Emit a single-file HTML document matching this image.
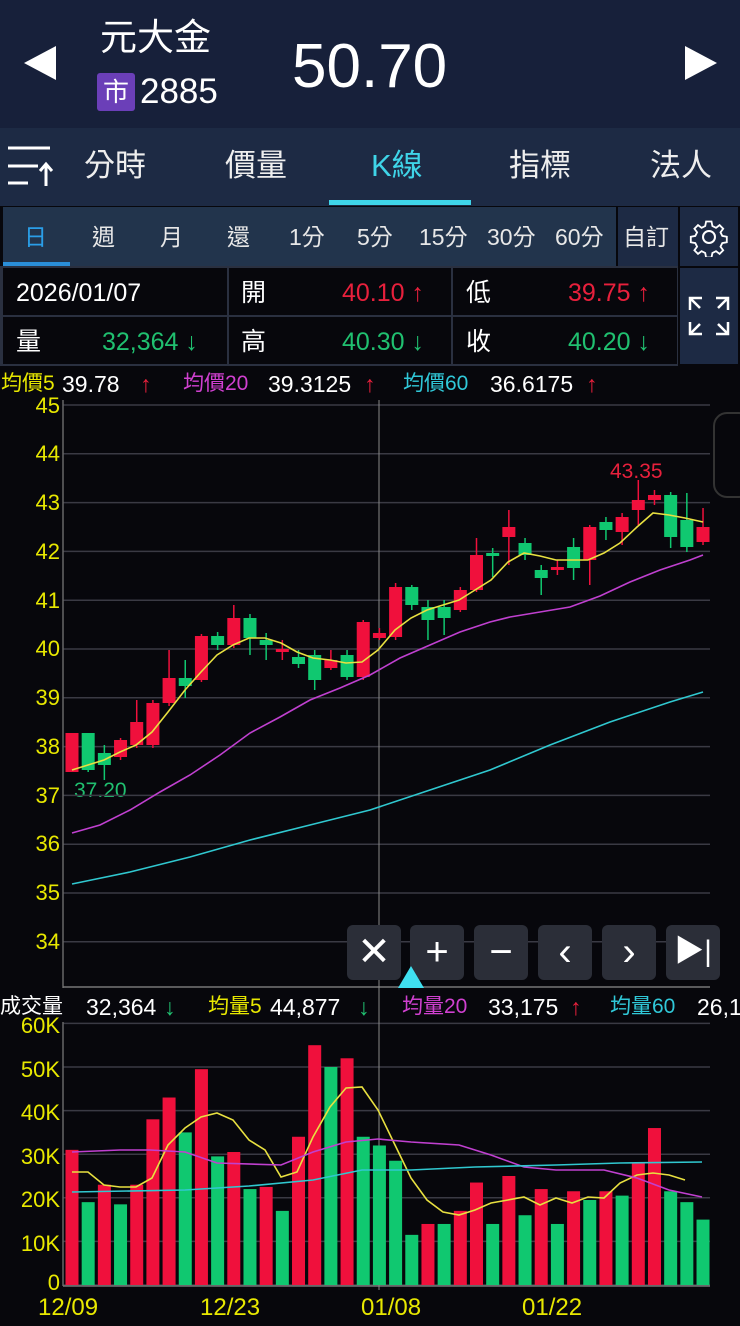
<!DOCTYPE html>
<html><head><meta charset="utf-8"><style>
*{margin:0;padding:0;box-sizing:border-box}
body{width:740px;height:1326px;background:#07070c;font-family:"Liberation Sans","Noto Sans CJK TC",sans-serif;color:#fff;position:relative;overflow:hidden}
.a{position:absolute;white-space:nowrap}
.hdr{left:0;top:0;width:740px;height:128px;background:#17203a}
.tabs{left:0;top:128px;width:740px;height:78px;background:#1d2a44}
.tab{position:absolute;top:146px;font-size:31px;color:#eee;line-height:40px}
.per{left:3px;top:207px;width:613px;height:59px;background:#22344c}
.pi{position:absolute;top:222px;font-size:23px;color:#e8e8e8;line-height:30px}
.cell{position:absolute;background:#07070c;height:47px}
.lbl{position:absolute;font-size:25px;line-height:30px}
.ylab{position:absolute;font-size:22px;color:#e8e800;left:2px;width:58px;text-align:right}
.m{position:absolute;font-size:21px;line-height:26px;white-space:nowrap}
.n{position:absolute;font-size:23px;line-height:26px;white-space:nowrap}
.btn{position:absolute;top:925px;width:54px;height:55px;background:#2b2e38;border-radius:6px;font-size:40px;color:#fff;text-align:center;line-height:54px}
</style></head><body>
<div class="a hdr"></div>
<svg class="a" style="left:22px;top:44px" width="36" height="38"><polygon points="34,2 34,36 2,19" fill="#fff"/></svg>
<svg class="a" style="left:683px;top:44px" width="36" height="38"><polygon points="2,2 2,36 34,19" fill="#fff"/></svg>
<div class="a" style="left:100px;top:14px;font-size:37px;line-height:48px">元大金</div>
<div class="a" style="left:97px;top:73px;width:38px;height:38px;background:#6b3fb8;border-radius:3px;font-size:26px;text-align:center;line-height:38px">市</div>
<div class="a" style="left:140px;top:70px;font-size:35px;line-height:44px">2885</div>
<div class="a" style="left:292px;top:32px;font-size:62px;line-height:70px">50.70</div>
<div class="a tabs"></div>
<svg class="a" style="left:8px;top:142px" width="48" height="46"><g stroke="#fff" stroke-width="3" fill="none"><line x1="0" y1="6" x2="42" y2="6"/><line x1="0" y1="24" x2="30" y2="24"/><line x1="0" y1="41" x2="20" y2="41"/><line x1="38" y1="44" x2="38" y2="22"/><polyline points="32,29 38,22 44,29"/></g></svg>
<div class="tab" style="left:84px">分時</div>
<div class="tab" style="left:225px">價量</div>
<div class="tab" style="left:371px;color:#3fd4e8">K線</div>
<div class="tab" style="left:509px">指標</div>
<div class="tab" style="left:650px">法人</div>
<div class="a" style="left:329px;top:200px;width:142px;height:5px;background:#3fd4e8"></div>
<div class="a per"></div>
<div class="a" style="left:3px;top:262px;width:67px;height:4px;background:#2a8ed8"></div>
<div class="pi" style="left:24px;color:#2a9ee8">日</div>
<div class="pi" style="left:92px">週</div>
<div class="pi" style="left:160px">月</div>
<div class="pi" style="left:227px">還</div>
<div class="pi" style="left:289px">1分</div>
<div class="pi" style="left:357px">5分</div>
<div class="pi" style="left:419px">15分</div>
<div class="pi" style="left:487px">30分</div>
<div class="pi" style="left:555px">60分</div>
<div class="a" style="left:618px;top:207px;width:60px;height:59px;background:#1d2a44"></div>
<div class="pi" style="left:623px">自訂</div>
<div class="a" style="left:680px;top:207px;width:58px;height:59px;background:#1d2a44"></div>
<svg class="a" style="left:689px;top:217px" width="40" height="40" viewBox="0 0 40 40"><g fill="none" stroke="#fff" stroke-width="2"><circle cx="20" cy="20" r="6"/><path d="M17 3h6l1 5 4 2 4-3 4 4-3 4 2 4 5 1v6l-5 1-2 4 3 4-4 4-4-3-4 2-1 5h-6l-1-5-4-2-4 3-4-4 3-4-2-4-5-1v-6l5-1 2-4-3-4 4-4 4 3 4-2z" transform="scale(.9) translate(2 2)"/></g></svg>
<div class="a" style="left:0;top:266px;width:678px;height:100px;background:#2a3040"></div>
<div class="cell" style="left:3px;top:268px;width:224px"></div>
<div class="cell" style="left:229px;top:268px;width:222px"></div>
<div class="cell" style="left:453px;top:268px;width:224px"></div>
<div class="cell" style="left:3px;top:317px;width:224px"></div>
<div class="cell" style="left:229px;top:317px;width:222px"></div>
<div class="cell" style="left:453px;top:317px;width:224px"></div>
<div class="lbl" style="left:16px;top:278px">2026/01/07</div>
<div class="lbl" style="left:241px;top:278px">開</div>
<div class="lbl" style="left:342px;top:278px;color:#e8203c">40.10 ↑</div>
<div class="lbl" style="left:466px;top:278px">低</div>
<div class="lbl" style="left:568px;top:278px;color:#e8203c">39.75 ↑</div>
<div class="lbl" style="left:16px;top:327px">量</div>
<div class="lbl" style="left:102px;top:327px;color:#20c070">32,364 ↓</div>
<div class="lbl" style="left:241px;top:327px">高</div>
<div class="lbl" style="left:342px;top:327px;color:#20c070">40.30 ↓</div>
<div class="lbl" style="left:466px;top:327px">收</div>
<div class="lbl" style="left:568px;top:327px;color:#20c070">40.20 ↓</div>
<div class="a" style="left:680px;top:268px;width:58px;height:96px;background:#1d2a44"></div>
<svg class="a" style="left:688px;top:296px" width="42" height="40"><g stroke="#fff" stroke-width="2.5" fill="none"><path d="M2 14V2h12M2 2l10 10"/><path d="M40 14V2H28M40 2L30 12"/><path d="M2 26v12h12M2 38l10-10"/><path d="M40 26v12H28M40 38L30 28"/></g></svg>
<div class="m" style="left:1px;top:371px;color:#e8e800">均價5</div><div class="n" style="left:62px;top:371px">39.78</div><div class="n" style="left:140px;top:371px;color:#e8203c">↑</div>
<div class="m" style="left:183px;top:371px;color:#d040d0">均價20</div><div class="n" style="left:268px;top:371px">39.3125</div><div class="n" style="left:364px;top:371px;color:#e8203c">↑</div>
<div class="m" style="left:403px;top:371px;color:#30c8d8">均價60</div><div class="n" style="left:490px;top:371px">36.6175</div><div class="n" style="left:586px;top:371px;color:#e8203c">↑</div>
<div class="m" style="left:0;top:994px">成交量</div><div class="n" style="left:86px;top:994px">32,364</div><div class="n" style="left:164px;top:994px;color:#20c070">↓</div>
<div class="m" style="left:208px;top:994px;color:#e8e800">均量5</div><div class="n" style="left:270px;top:994px">44,877</div><div class="n" style="left:358px;top:994px;color:#20c070">↓</div>
<div class="m" style="left:402px;top:994px;color:#d040d0">均量20</div><div class="n" style="left:488px;top:994px">33,175</div><div class="n" style="left:570px;top:994px;color:#e8203c">↑</div>
<div class="m" style="left:610px;top:994px;color:#30c8d8">均量60</div><div class="n" style="left:697px;top:994px">26,1</div>
<div class="ylab" style="top:393px">45</div><div class="ylab" style="top:441px">44</div><div class="ylab" style="top:490px">43</div><div class="ylab" style="top:539px">42</div><div class="ylab" style="top:588px">41</div><div class="ylab" style="top:636px">40</div><div class="ylab" style="top:685px">39</div><div class="ylab" style="top:734px">38</div><div class="ylab" style="top:783px">37</div><div class="ylab" style="top:831px">36</div><div class="ylab" style="top:880px">35</div><div class="ylab" style="top:929px">34</div>
<div class="ylab" style="top:1013px">60K</div><div class="ylab" style="top:1057px">50K</div><div class="ylab" style="top:1100px">40K</div><div class="ylab" style="top:1144px">30K</div><div class="ylab" style="top:1187px">20K</div><div class="ylab" style="top:1231px">10K</div><div class="ylab" style="top:1270px">0</div>
<div class="a" style="left:38px;top:1294px;font-size:24px;color:#e8e800">12/09</div>
<div class="a" style="left:200px;top:1294px;font-size:24px;color:#e8e800">12/23</div>
<div class="a" style="left:361px;top:1294px;font-size:24px;color:#e8e800">01/08</div>
<div class="a" style="left:522px;top:1294px;font-size:24px;color:#e8e800">01/22</div>
<div class="a" style="left:610px;top:460px;font-size:21px;color:#e8203c">43.35</div>
<div class="a" style="left:74px;top:779px;font-size:21px;color:#20c070">37.20</div>
<svg id="ch" class="a" style="left:0;top:0" width="740" height="1326"></svg>
<div class="btn" style="left:347px">✕</div>
<div class="btn" style="left:410px">+</div>
<div class="btn" style="left:474px">−</div>
<div class="btn" style="left:538px">‹</div>
<div class="btn" style="left:602px">›</div>
<div class="btn" style="left:666px;font-size:30px">▶|</div>
<svg class="a" style="left:398px;top:966px" width="26" height="22"><polygon points="13,0 26,22 0,22" fill="#3fe0f0"/></svg>
<script>
var s='',G='#3a3a44',R='#f0103c',Gr='#10c870';
for(var p=45;p>=34;p--){var y=405+(45-p)*48.8;s+='<line x1="63" x2="710" y1="'+y+'" y2="'+y+'" stroke="'+G+'" stroke-width="1.5"/>';}
for(var k=0;k<=6;k++){var y=1285-k*43.6;s+='<line x1="63" x2="710" y1="'+y+'" y2="'+y+'" stroke="'+G+'" stroke-width="1.5"/>';}
s+='<line x1="63" x2="63" y1="400" y2="988" stroke="#666" stroke-width="1.5"/><line x1="63" x2="710" y1="987" y2="987" stroke="#777" stroke-width="1.5"/>';
s+='<line x1="63" x2="63" y1="1022" y2="1286" stroke="#666" stroke-width="1.5"/><line x1="63" x2="710" y1="1286" y2="1286" stroke="#777" stroke-width="1.5"/>';
s+='<line x1="379" x2="379" y1="400" y2="1290" stroke="#888" stroke-width="1"/>';
var c=[[733,772,733,772,1],[733,770,733,772,0],[753,765,745,780,0],[740,757,738,760,1],[722,745,700,748,1],[703,745,700,748,1],[678,703,650,706,1],[678,686,660,698,0],[636,680,634,682,1],[636,645,632,650,0],[618,645,605,648,1],[618,638,614,655,0],[640,645,633,660,0],[649,652,640,660,1],[657,664,650,668,0],[655,680,650,690,0],[660,668,650,670,1],[655,677,650,680,0],[622,677,620,680,1],[633,638,628,640,1],[587,637,583,640,1],[587,605,585,610,0],[607,620,600,640,0],[607,618,600,635,0],[590,610,587,612,1],[555,590,538,592,1],[553,556,548,577,0],[527,537,510,565,1],[543,555,538,560,0],[570,578,565,595,0],[567,570,560,575,1],[547,568,538,580,0],[527,560,525,585,1],[522,530,517,540,0],[517,532,513,545,1],[500,510,480,525,1],[495,500,490,505,1],[495,537,492,548,0],[520,547,493,552,0],[527,542,508,545,1]];
var v=[31,19,23,18.5,23,38,43,35,49.5,29.5,30.5,22,22.5,17,34,55,50,52,34,32,28.5,11.5,14,14,17,23.5,14,25,16,22,14,21.5,19.5,21.5,20.5,28,36,21.5,19,15];
var vc=[1,0,1,0,1,1,1,0,1,0,1,0,1,0,1,1,0,1,0,0,0,0,1,0,1,1,0,1,0,1,0,1,0,1,0,1,1,0,0,0];
for(var i=0;i<40;i++){var x=72+i*16.18,d=c[i],col=d[4]?R:Gr;
s+='<line x1="'+x+'" x2="'+x+'" y1="'+d[2]+'" y2="'+d[3]+'" stroke="'+col+'" stroke-width="1.5"/>';
s+='<rect x="'+(x-6.5)+'" y="'+d[0]+'" width="13" height="'+Math.max(2,d[1]-d[0])+'" fill="'+col+'"/>';
var h=v[i]*4.36;s+='<rect x="'+(x-6.5)+'" y="'+(1285-h)+'" width="13" height="'+h+'" fill="'+(vc[i]?R:Gr)+'"/>';}
function pl(pts,col){s+='<polyline points="'+pts+'" fill="none" stroke="'+col+'" stroke-width="1.6"/>';}
pl('72,770 88,765 104,760 120,752 136,745 152,732 168,712 185,690 201,672 217,655 233,645 249,638 265,638 281,643 297,652 313,658 330,660 346,663 362,662 378,650 395,630 411,618 427,610 443,605 459,600 475,590 491,580 508,562 524,553 540,556 556,560 572,560 588,560 604,553 620,543 637,527 653,513 669,515 685,518 703,522','#e8e040');
pl('72,833 100,825 130,810 160,792 190,775 220,755 250,733 280,717 310,700 340,688 370,675 400,658 430,645 460,632 490,622 510,617 540,612 570,607 600,596 630,582 660,570 690,560 703,555','#c040d0');
pl('72,884 130,872 190,857 250,840 310,825 370,810 430,790 490,770 550,745 610,722 670,702 703,692','#30c8d0');
pl('72,1172 88,1172 104,1185 120,1187 136,1187 152,1178 168,1145 185,1128 201,1117 217,1113 233,1120 249,1140 265,1150 281,1177 297,1172 313,1137 330,1107 346,1088 362,1087 378,1110 395,1145 411,1178 427,1200 443,1212 459,1215 475,1210 491,1203 508,1200 524,1197 540,1205 556,1198 572,1203 588,1197 604,1198 620,1183 637,1175 653,1173 669,1175 685,1180','#e8e040');
pl('72,1152 120,1150 150,1150 185,1152 217,1163 281,1165 313,1152 346,1142 378,1139 411,1142 459,1145 491,1155 524,1167 556,1170 604,1170 637,1178 669,1190 702,1197','#c040d0');
pl('72,1192 185,1190 249,1186 313,1180 362,1170 411,1170 475,1167 556,1165 620,1163 702,1162','#30c8d0');
document.getElementById('ch').innerHTML=s;
</script>
<div class="a" style="left:713px;top:412px;width:40px;height:86px;border:2px solid #333;border-radius:14px"></div>
</body></html>
